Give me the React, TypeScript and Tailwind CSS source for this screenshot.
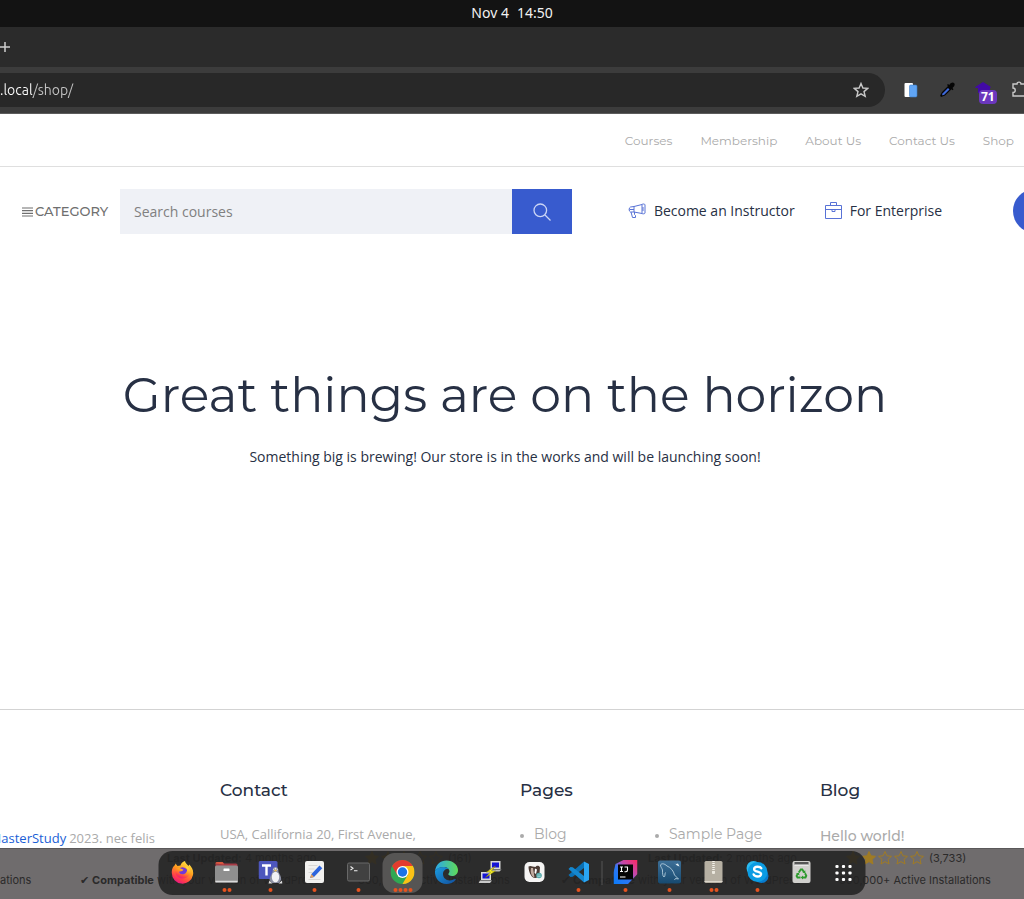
import React from "react";

const head = "font-['Montserrat',Inter,sans-serif]";

function StatusDots({ count }: { count: number }) {
  return (
    <span className="flex h-1 justify-center gap-px">
      {Array.from({ length: count }, (_, i) => (
        <i key={i} className="size-1 rounded-full bg-[#e6531f]" />
      ))}
    </span>
  );
}

function Firefox() {
  return (
    <svg viewBox="0 0 24 24" className="size-6">
      <defs>
        <linearGradient id="ff" x1="0.8" y1="0" x2="0.3" y2="1">
          <stop offset="0" stopColor="#fff04a" />
          <stop offset=".45" stopColor="#ff9a1e" />
          <stop offset=".8" stopColor="#ff3a4c" />
          <stop offset="1" stopColor="#e31587" />
        </linearGradient>
      </defs>
      <path d="M5 3.500 7 6l3-.5C10.500 3 12 2 14.500 1c0 2 2 3 3.500 5l.8-1.500c3 3 4.500 6.500 3.700 10.500A10.700 10.700 0 0 1 1.300 13C1 9 2.500 6.500 4.500 5z" fill="url(#ff)" />
      <circle cx="12" cy="12.500" r="5.300" fill="#7139d8" />
      <path d="M6 8.500c3-1.500 5 .3 7 1.200-1 1.500-3 1.500-4.500 2 .8 3 4.500 3.300 7 1 2-2.400 1-5-1-6.500 5 .5 6.500 5.500 4 9.200-4 5.500-13.500 3-13.800-4z" fill="url(#ff)" />
    </svg>
  );
}

function Files() {
  return (
    <svg viewBox="0 0 24 24" className="size-6">
      <path d="M1 3.500A1.500 1.500 0 0 1 2.500 2H8l2 1.500h11.500A1.500 1.500 0 0 1 23 5v6H1z" fill="#a63a45" />
      <path d="M1 3.500A1.500 1.500 0 0 1 2.500 2H8l1.500 2.500z" fill="#d8573e" />
      <rect x=".5" y="5.500" width="23" height="17.500" rx="1.500" fill="#8f8f8f" />
      <path d="M1 21.300h22" stroke="#eee" strokeWidth="1" />
      <rect x="9" y="8.500" width="6" height="2.500" rx=".6" fill="#fff" />
    </svg>
  );
}

function Teams() {
  return (
    <svg viewBox="0 0 24 24" className="size-6">
      <rect x="0" y="1" width="19" height="18" rx="1.500" fill="#4d56bd" />
      <path d="M3.500 5.500h9M8 5.500v10" stroke="#fff" strokeWidth="2.400" />
      <path d="M14 12c0-3.500 1-5 3-5s3 1.500 3 5c1 2.500 3 4.500 2.700 7.500L20.500 23h-7L11 20c0-3 2-5 3-8z" fill="#8b8fa3" />
      <ellipse cx="17" cy="17" rx="3.700" ry="5.300" fill="#f2f2f5" />
      <ellipse cx="17" cy="9.300" rx="1.900" ry="1.500" fill="#f2f2f5" />
      <path d="m15.500 10.500 1.500 1.300 1.500-1.300-1.500-1z" fill="#e5b64b" />
      <path d="M11 20.500 14 23.500h-4zM23.500 20.500 20 23.500h4z" fill="#ddd" />
      <circle cx="16.200" cy="9" r=".5" fill="#222" /><circle cx="17.800" cy="9" r=".5" fill="#222" />
    </svg>
  );
}

function Editor() {
  return (
    <svg viewBox="0 0 24 24" className="size-6">
      <rect x="2.500" y="1" width="19" height="22" rx="2" fill="#f2f1ef" />
      <path d="M6 5.500h9M6 9h6M6 12.500h4M6 19.500h12" stroke="#d9d7d5" strokeWidth="1" />
      <path d="M7.500 18 9 14l8-8.500 2.800 2.700L11.500 17z" fill="#2e65dd" />
      <path d="M7.500 18 9 14l2.500 3z" fill="#e9a15a" />
    </svg>
  );
}

function Terminal() {
  return (
    <svg viewBox="0 0 24 24" className="size-6">
      <rect x="1" y="3" width="22" height="18" rx="1.500" fill="#414141" stroke="#686868" />
      <path d="m4 6.500 2.500 1.800L4 10M7.500 10.800H11" fill="none" stroke="#f0f0f0" strokeWidth="1.100" />
    </svg>
  );
}

function Chrome() {
  return (
    <svg viewBox="0 0 24 24" className="size-6">
      <circle cx="12" cy="12" r="12" fill="#30a853" />
      <path d="M12 12 1.600 6A12 12 0 0 1 22.400 6H12z" fill="#e33b2e" />
      <path d="M22.400 6A12 12 0 0 1 12 24l5.200-9L12 6z" fill="#fbc116" />
      <path d="M1.600 6 6.800 15 12 12V6z" fill="#e33b2e" />
      <circle cx="12" cy="12" r="6" fill="#fff" />
      <circle cx="12" cy="12" r="4.700" fill="#1a73e8" />
    </svg>
  );
}

function Edge() {
  return (
    <svg viewBox="0 0 24 24" className="size-6">
      <defs>
        <linearGradient id="edgeTop"><stop stopColor="#2aa8ec" /><stop offset="1" stopColor="#5fda57" /></linearGradient>
        <linearGradient id="edgeLow" x2="1" y2="1"><stop stopColor="#1b9ce0" /><stop offset="1" stopColor="#124f9d" /></linearGradient>
      </defs>
      <path d="M.5 11C1.500 4.500 6 .5 12 .5c6.500 0 11.500 4.500 11.500 9.500 0 4-3 6-6 6-2.500 0-3.700-1-3.700-1.700 0-.8 1.200-1.300 1.200-3C15 9 12.500 7 9.500 7 5 7 2 9 .5 11z" fill="url(#edgeTop)" />
      <path d="M.5 11C2 8.500 5 7 9.500 7c2.300 0 4 1 5 2.300-3-1-6 1.200-6 4.700 0 5 5 8 10.500 5.500 1.500-.8 2.800-.8 2 .5-2 2.500-5.500 4-9 4C5 24 0 18 .5 11z" fill="url(#edgeLow)" />
    </svg>
  );
}

function Putty() {
  return (
    <svg viewBox="0 0 24 24" className="size-6">
      <path d="M12 1h10v8H12z" fill="#d8d8d8" /><path d="M13.500 2.500h7v5h-7z" fill="#1414d8" />
      <path d="M11 9.500h12l-2 2H10z" fill="#bdbdbd" />
      <path d="M2.500 12h10v8h-10z" fill="#d8d8d8" /><path d="M4 13.500h7v5H4z" fill="#1414d8" />
      <path d="M1.500 20.500h12l-2 2.500H0z" fill="#c9c9c9" />
      <path d="m17 6-9 6h4l-5 5.500L17 11h-4z" fill="#f7ef27" stroke="#777100" strokeWidth=".5" />
    </svg>
  );
}

function DBeaver() {
  return (
    <svg viewBox="0 0 24 24" className="size-6">
      <rect x="2" y="2" width="20" height="20" rx="5" fill="#f6f5f4" />
      <path d="M6 6.500C7.500 5.500 9 6 10 6.500l3 .5c1-2 4-1.500 4.500.5l-.5 6c-.5 3.500-3 5-5 4.500-4-1-6-7-6-11.500z" fill="#4b3b34" />
      <path d="M8.500 8 10.500 8l1.500 9.500c-2.500-.5-4.500-4.500-3.500-9.500z" fill="#c3aca0" />
      <path d="M12.500 8.500 14.500 9.500l-1 4.500-1.500-1z" fill="#fff" />
      <circle cx="16.500" cy="15.500" r="2.800" fill="#55a9a9" /><path d="M14.800 15h3.400M14.800 16.500h3.400" stroke="#d0eeee" strokeWidth=".5" />
    </svg>
  );
}

function VSCode() {
  return (
    <svg viewBox="0 0 24 24" className="size-6">
      <path d="M17.500 1.500 2 15l2 2 2.200-.2L17.500 8z" fill="#0a71b6" />
      <path d="M17.500 22.500 2 9l2-2 2.200.2L17.500 16z" fill="#1587ce" />
      <path d="M17.500 1.500 22.500 4v16l-5 2.500z" fill="#2aa5f3" />
    </svg>
  );
}

function IntelliJ() {
  return (
    <svg viewBox="0 0 24 24" className="size-6">
      <defs>
        <linearGradient id="ij" x1="0" y1="1" x2="1" y2="0">
          <stop offset="0" stopColor="#087cfa" /><stop offset=".42" stopColor="#3176f2" />
          <stop offset=".62" stopColor="#c04bb0" /><stop offset="1" stopColor="#fe2860" />
        </linearGradient>
      </defs>
      <path d="M10 0h14v14l-9.500 10H0V12.500L2 4z" fill="url(#ij)" />
      <rect x="4.500" y="4.500" width="15" height="15" fill="#050505" />
      <path d="M6.500 7h3M8 7v4.500M6.500 11.500h3M11 7h3v3c0 1.200-.7 1.700-1.500 1.700H11M6.500 17h5.500" fill="none" stroke="#fff" strokeWidth="1.100" />
    </svg>
  );
}

function MySql() {
  return (
    <svg viewBox="0 0 24 24" className="size-6">
      <defs>
        <linearGradient id="wb" x2="0" y2="1"><stop stopColor="#3d6f97" /><stop offset="1" stopColor="#174a70" /></linearGradient>
      </defs>
      <rect x=".5" y=".5" width="23" height="23" rx="2" fill="url(#wb)" />
      <path d="M3 5c1-2 4-1.500 6.500 1 4 1.500 6.500 5 7.500 9l4 4-3-.5-1 1.500M3 5c0 2 1.500 3 2 5 0 3 0 6 1.500 7 1.500-.5.5-3 1.500-4.500" fill="none" stroke="#b3cddd" strokeWidth=".9" />
      <path d="m15 2.500 2.500 1 2 2 2.500 1-1.500-3-2 .5z" fill="#e5f0f5" />
    </svg>
  );
}

function Archive() {
  return (
    <svg viewBox="0 0 24 24" className="size-6">
      <rect x="3" y="1" width="18" height="22" rx="1.500" fill="#b6b0a3" />
      <path d="M3 21.500h18" stroke="#dad5ca" />
      <path d="M12 1v11" stroke="#f3f1ea" strokeWidth="2.500" strokeDasharray="1 1" />
      <rect x="10.500" y="11" width="3" height="3" rx="1" fill="#ece9df" />
    </svg>
  );
}

function Skype() {
  return (
    <svg viewBox="0 0 24 24" className="size-6">
      <circle cx="8" cy="8" r="7" fill="#2abaf0" /><circle cx="16" cy="16" r="7" fill="#087bce" />
      <circle cx="12" cy="12" r="10" fill="#0b9ce3" />
      <path d="M15.800 8.300c-1-2-7-2.400-7.200.8-.2 3.300 7 1.800 7 5 0 3.300-6.500 2.900-7.500.3" fill="none" stroke="#fff" strokeWidth="2.400" strokeLinecap="round" />
    </svg>
  );
}

function Trash() {
  return (
    <svg viewBox="0 0 24 24" className="size-6">
      <rect x="3" y="1" width="18" height="22" rx="2" fill="#d1d0cd" />
      <rect x="5" y="2" width="14" height="3" fill="#555" /><path d="M5 5h14" stroke="#fff" />
      <g fill="none" stroke="#2d9a2d" strokeWidth="1.900">
        <path d="m9.300 12.500 2-3h1.500l1.700 2.700" /><path d="m15.500 13.300 1.300 2.400-.8 1.800h-3" /><path d="M11 17.500H8l-.9-1.600 1.300-2.400" />
      </g>
      <path d="m13 12.500 3 .8-.3-3zM13.500 15.500v4l-2.300-2zM6.500 13.500l3-.8.500 2.900z" fill="#2d9a2d" />
    </svg>
  );
}

function Apps() {
  return (
    <svg viewBox="0 0 24 24" className="size-6" fill="#fff">
      {[5.5, 12, 18.5].map((y) => [5.5, 12, 18.5].map((x) => <rect key={`${x}-${y}`} x={x - 1.6} y={y - 1.6} width="3.2" height="3.2" rx="1.1" />))}
    </svg>
  );
}

type DockApp = { name: string; icon: React.ReactNode; dots: number; active?: boolean };

const favourites: DockApp[] = [
  { name: "Firefox", icon: <Firefox />, dots: 0 },
  { name: "Files", icon: <Files />, dots: 2 },
  { name: "Teams", icon: <Teams />, dots: 1 },
  { name: "Text Editor", icon: <Editor />, dots: 1 },
  { name: "Terminal", icon: <Terminal />, dots: 1 },
  { name: "Chrome", icon: <Chrome />, dots: 4, active: true },
  { name: "Edge", icon: <Edge />, dots: 0 },
  { name: "PuTTY", icon: <Putty />, dots: 0 },
  { name: "DBeaver", icon: <DBeaver />, dots: 0 },
  { name: "Visual Studio Code", icon: <VSCode />, dots: 1 },
];

const running: DockApp[] = [
  { name: "IntelliJ IDEA", icon: <IntelliJ />, dots: 1 },
  { name: "MySQL Workbench", icon: <MySql />, dots: 1 },
  { name: "Archive Manager", icon: <Archive />, dots: 2 },
  { name: "Skype", icon: <Skype />, dots: 1 },
  { name: "Trash", icon: <Trash />, dots: 0 },
];

function DockButton({ app }: { app: DockApp }) {
  return (
    <button aria-label={app.name} className="flex w-11 flex-col items-center">
      <span className={app.active ? "grid h-10 w-10 place-items-center rounded-xl bg-[#565554]" : "grid h-10 w-10 place-items-center"}>
        <span className="flex flex-col items-center gap-1 pt-1.5">
          {app.icon}
          <StatusDots count={app.dots} />
        </span>
      </span>
    </button>
  );
}

function Dock() {
  return (
    <nav aria-label="Dock" className="absolute top-0.5 left-1/2 flex h-11 -translate-x-1/2 items-center rounded-[14px] bg-[#232323]/88 pr-0.5 pl-0.5">
      {favourites.map((a) => <DockButton key={a.name} app={a} />)}
      <span className="mx-px h-6 w-px bg-[#555]" />
      {running.map((a) => <DockButton key={a.name} app={a} />)}
      <button aria-label="Show applications" className="flex w-10 justify-center"><Apps /></button>
    </nav>
  );
}

function Stars() {
  return (
    <span className="flex">
      {[0, 1, 2, 3, 4].map((i) => (
        <svg key={i} viewBox="0 0 16 16" className="size-4">
          <path d="m8 1.500 1.900 4.300 4.600.5-3.500 3.100 1 4.600-4-2.400L4 14l1-4.600-3.500-3.100 4.600-.5z" fill={i < 2 ? "#a07b24" : "none"} stroke="#a07b24" strokeWidth="1" />
        </svg>
      ))}
    </span>
  );
}

function PluginCard({ months, votes }: { months: number; votes: string }) {
  return (
    <div className="grid w-[430px] shrink-0 grid-cols-[278px_1fr] content-start gap-y-1 text-[#2b2a2a]">
      <p className="pl-[87px]"><b>Last Updated:</b> {months} months ago</p>
      <p className="flex items-center gap-1 pl-1.5"><Stars />({votes})</p>
      <p>✔ <b>Compatible</b> with your version of WordPress</p>
      <p>300,000+ Active Installations</p>
    </div>
  );
}

export default function App() {
  return (
    <div className="flex min-h-screen flex-col overflow-hidden bg-white font-['Open_Sans',sans-serif] text-[#273044]">
      <div className="flex h-[27px] items-center justify-center gap-2 bg-[#131313] pb-0.5 font-['Noto_Sans',sans-serif] text-sm text-[#f2f2f2]">
        <span>Nov 4</span><span>14:50</span>
      </div>
      <div className="flex h-10 items-center bg-[#2b2b2b]">
        <button aria-label="New tab" className="text-[#d0d0d0]">
          <svg viewBox="0 0 10 10" className="size-2.5"><path d="M0 5h10M5 0v10" stroke="currentColor" strokeWidth="1.500" /></svg>
        </button>
      </div>
      <div className="flex h-[47px] items-center border-b border-[#5c5c5c] bg-[#3c3c3c]">
        <div className="flex h-[34px] flex-1 items-center rounded-r-full bg-[#282828] pr-4">
          <input aria-label="Address" readOnly value=".local/shop/" className="min-w-0 flex-1 bg-[linear-gradient(90deg,#fff_33px,#c7c7c7_33px)] bg-clip-text font-['Ubuntu','Noto_Sans',sans-serif] text-sm text-transparent" />
          <button aria-label="Bookmark this tab">
            <svg viewBox="0 0 16 16" className="size-4"><path d="m8 1.500 1.900 4.500 4.800.4-3.700 3.200 1.200 4.700L8 11.800l-4.200 2.500L5 9.600 1.300 6.400 6.100 6z" fill="none" stroke="#c9c9c9" strokeWidth="1.400" /></svg>
          </button>
        </div>
        <div className="flex w-[139px] shrink-0 items-center gap-5 pl-[18px]">
          <svg viewBox="0 0 16 16" className="size-4 shrink-0"><rect x="1.500" y="1" width="8.500" height="14" rx="1" fill="#fff" /><rect x="6.500" y="3" width="7.500" height="12" rx="1.200" fill="#60a5f5" stroke="#3d7cc4" strokeWidth=".6" /></svg>
          <svg viewBox="0 0 16 16" className="size-4 shrink-0"><path d="m2 15-.8-1.500L3 10l6-6-1-1 1-1 1.300 1C12 .500 14 0 15.200 1.200 16.300 2.500 15.500 4 13.500 6l1 1.300-1 1-1-1-6.500 6.300L2 15z" fill="#050505" /><path d="m3 13.200.5-1.700 5.500-5.500 1.500 1.500L5 13z" fill="#3e68d8" /></svg>
          <span className="relative size-4 shrink-0">
            <svg viewBox="0 0 16 16" className="size-4"><path d="m8 0 8 5-1 1v5H3V6H0l1-1.500z" fill="#420aa5" /></svg>
            <span className="absolute top-2 left-1 rounded-[4px] bg-[#6b37bd] px-0.5 font-['Noto_Sans',sans-serif] text-xs leading-[14px] font-bold text-white">71</span>
          </span>
          <svg viewBox="0 0 18 18" className="size-[18px] shrink-0"><path d="M2 3h4c0-2.500 4-2.500 4 0h5v12H2v-3.500c3 0 3-4.500 0-4.500z" fill="none" stroke="#c9c9c9" strokeWidth="1.400" /></svg>
        </div>
      </div>

      <nav className={`${head} flex h-[53px] items-center justify-end gap-7 border-b border-[#dfdfdf] pt-0.5 pr-[10px] text-xs text-[#aaa]`}>
        {["Courses", "Membership", "About Us", "Contact Us", "Shop"].map((t) => <a key={t} href="#">{t}</a>)}
      </nav>

      <header className="flex items-center pt-[22px] pl-[22px] whitespace-nowrap">
        <button className={`${head} flex w-[98px] shrink-0 items-center gap-0.5 text-[13px] font-medium text-[#6f6f6f]`}>
          <svg viewBox="0 0 11 10" className="h-2.5 w-[11px]"><path d="M0 1h11M0 3.700h11M0 6.300h11M0 9h11" stroke="currentColor" strokeWidth="1.200" /></svg>
          CATEGORY
        </button>
        <form className="flex h-[45px] flex-1">
          <input aria-label="Search courses" placeholder="Search courses" className="min-w-0 flex-1 bg-[#eff1f6] px-3.5 text-sm placeholder:text-[#808080]" />
          <button type="button" aria-label="Search" className="grid w-[60px] place-items-center bg-[#385bce]">
            <svg viewBox="0 0 18 18" className="size-[18px]" fill="none" stroke="#cbd5f5" strokeWidth="1.300"><circle cx="7.300" cy="7.300" r="6.300" /><path d="m12 12 5.500 5.500" /></svg>
          </button>
        </form>
        <div className="flex items-center gap-[30px] pb-0.5 pl-14 text-sm">
          <a href="#" className="flex items-center gap-2">
            <svg viewBox="0 0 18 16" className="h-4 w-[18px]" fill="none" stroke="#5872d6" strokeWidth="1"><path d="M6 3.500 14 1.500V10.500L6 9zM6 3.500 2.500 4C.7 4.500.7 8.500 2.500 9H6M1.500 6.500H6M14 1.500C14.500.8 17 .8 17 1.800V10c0 1-2.500 1-3 .5M15 4v4M3 9l1.500 5.500h3V12.500L6.500 11.500V9" /></svg>
            Become an Instructor
          </a>
          <a href="#" className="flex items-center gap-2">
            <svg viewBox="0 0 17 17" className="size-[17px]" fill="none" stroke="#5872d6" strokeWidth="1"><path d="M.500 3.500h16v13H.500zM5.500 3.500v-3h6v3M.500 7.500h16M7 7.500v2h3v-2" /></svg>
            For Enterprise
          </a>
        </div>
        <div className="ml-[71px] h-[45px] w-[11px] shrink-0">
          <button aria-label="Account" className="size-11 rounded-full bg-[#385bce]" />
        </div>
      </header>

      <main className="flex h-[475px] flex-col items-center pt-[130px] pr-[14px] text-center">
        <h1 className={`${head} text-[49px] leading-[62px] font-normal whitespace-nowrap`}>Great things are on the horizon</h1>
        <p className="mt-5 text-sm leading-[22px]">Something big is brewing! Our store is in the works and will be launching soon!</p>
      </main>

      <footer className="grid grid-cols-[220px_300px_300px_1fr] border-t border-[#d3d3d3] pt-[68px] text-[13px] whitespace-nowrap text-[#aaa]">
        <p className="flex w-[155px] justify-end gap-[3px] pt-[50px] leading-5"><a href="#" className="text-[#195ed6]">MasterStudy</a> 2023. nec felis</p>
        <section>
          <h2 className={`${head} text-[17px] leading-6 font-medium text-[#273044]`}>Contact</h2>
          <p className="mt-[22px] leading-5">USA, Callifornia 20, First Avenue,</p>
        </section>
        <section>
          <h2 className={`${head} text-[17px] leading-6 font-medium text-[#273044]`}>Pages</h2>
          <ul className={`${head} mt-[22px] grid grid-cols-[135px_1fr] text-sm leading-5`}>
            {["Blog", "Sample Page"].map((t) => <li key={t} className="flex items-center gap-2.5"><i className="mt-1 size-1 rounded-full bg-[#aaa]" /><a href="#">{t}</a></li>)}
          </ul>
        </section>
        <section>
          <h2 className={`${head} text-[17px] leading-6 font-medium text-[#273044]`}>Blog</h2>
          <a href="#" className={`${head} mt-6 block text-sm leading-5 font-medium`}>Hello world!</a>
        </section>
      </footer>

      <div className="relative mt-auto flex h-[51px] shrink-0 gap-[51px] overflow-hidden border-t border-[#5a5859] bg-[#6f6c6d] font-[Inter,sans-serif] text-[11px] leading-[18px] whitespace-nowrap">
        <p className="w-[29px] shrink-0 pt-[22px] text-right text-[#2b2a2a]">ations</p>
        <PluginCard months={4} votes="161" />
        <PluginCard months={2} votes="3,733" />
        <Dock />
      </div>
    </div>
  );
}
